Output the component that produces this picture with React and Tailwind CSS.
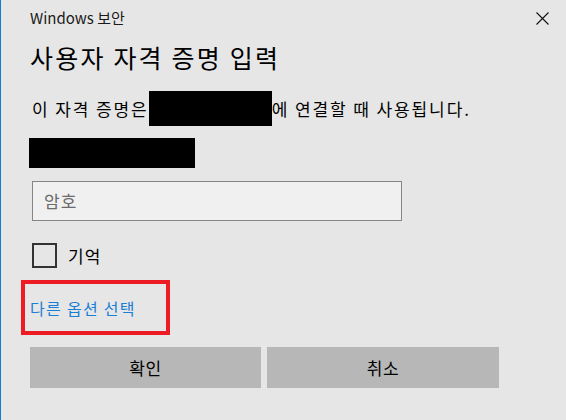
import React from "react";

const font = { fontFamily: '"Noto Sans CJK KR", "Noto Sans", sans-serif' };

export default function App() {
  return (
    <div
      className="relative w-[566px] h-[420px] bg-[#e6e6e6] border-l border-[#1979d4] text-black overflow-hidden"
      style={font}
    >
      {/* close button */}
      <button className="absolute right-[16px] top-[10px] w-[16px] h-[16px] flex items-center justify-center">
        <svg width="13" height="13" viewBox="0 0 13 13">
          <path d="M0.5 0.5 L12.5 12.5 M12.5 0.5 L0.5 12.5" stroke="#111" strokeWidth="1.1" />
        </svg>
      </button>

      <div className="pl-[29px] pt-[7px] flex flex-col">
        <div className="text-[15px] leading-[22px] text-[#1a1a1a]">Windows 보안</div>
        <h1 className="mt-[12px] text-[25px] leading-[32px] tracking-[2.2px]">사용자 자격 증명 입력</h1>

        <p className="mt-[18px] flex items-center text-[17px] leading-[35px] pl-[2px] tracking-[1.9px]">
          <span>이 자격 증명은</span>
          <span className="inline-block w-[123px] h-[35px] bg-black" />
          <span>에 연결할 때 사용됩니다.</span>
        </p>

        <div className="mt-[12px] -ml-[1px] w-[166px] h-[30px] bg-black" />

        <div className="mt-[13px] ml-[2px] w-[370px] h-[40px] border border-[#858585] bg-[#f0f0f0] flex items-center pl-[11px]">
          <span className="text-[17px] text-[#6b6b6b] tracking-[1px]">암호</span>
        </div>

        <label className="mt-[22px] ml-[2px] flex items-center gap-[11px]">
          <span className="w-[25px] h-[25px] border-2 border-[#333] bg-[#e6e6e6]" />
          <span className="text-[17px] leading-[25px] tracking-[1px]">기억</span>
        </label>

        <div className="mt-[12px] -ml-[9px] w-[149px] h-[55px] border-4 border-[#ed1c24] flex items-center pl-[5px]">
          <span className="text-[16px] text-[#1a7fd4] tracking-[1.3px]">다른 옵션 선택</span>
        </div>

        <div className="mt-[12px] flex gap-[6px]">
          <button className="w-[231px] h-[41px] bg-[#b7b7b7] text-[17px] tracking-[0.5px]">확인</button>
          <button className="w-[232px] h-[41px] bg-[#b7b7b7] text-[17px] tracking-[0.5px]">취소</button>
        </div>
      </div>
    </div>
  );
}
